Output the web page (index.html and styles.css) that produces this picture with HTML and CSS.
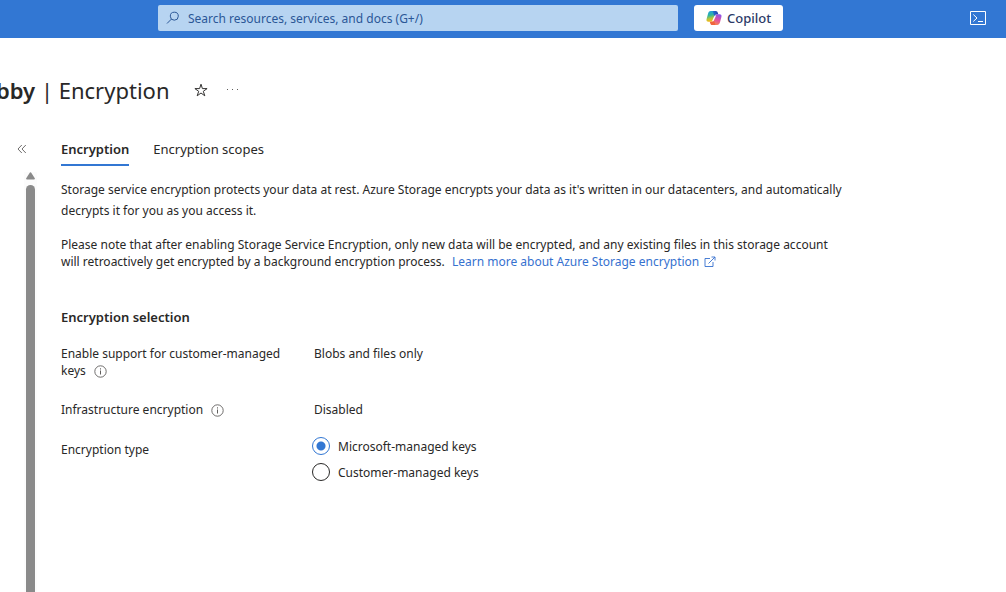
FILE: index.html
```html
<!DOCTYPE html>
<html lang="en">
<head>
<meta charset="utf-8">
<title>Encryption</title>
<link rel="stylesheet" href="styles.css">
</head>
<body>
<header class="topbar">
  <label class="search">
    <svg class="search-icon" width="14" height="14" viewBox="0 0 14 14" fill="none" stroke="currentColor" stroke-width="1"><circle cx="8.3" cy="5.2" r="4"/><path d="M5.4 8.1 1 12.5"/></svg>
    <input class="search-input" type="text" placeholder="Search resources, services, and docs (G+/)" aria-label="Search">
  </label>
  <button class="copilot" type="button">
    <svg width="16" height="16" viewBox="0 0 16 16">
      <defs>
        <linearGradient id="left" x1="0" y1="0" x2="0.2" y2="1"><stop offset="0" stop-color="#1c9be8"/><stop offset=".45" stop-color="#2fb5a0"/><stop offset=".75" stop-color="#b5c63a"/><stop offset="1" stop-color="#f5b91e"/></linearGradient>
        <linearGradient id="right" x1=".6" y1="0" x2=".3" y2="1"><stop offset="0" stop-color="#8f55e6"/><stop offset=".5" stop-color="#e0529f"/><stop offset="1" stop-color="#fb8a50"/></linearGradient>
        <linearGradient id="fold" x1="0" y1="0" x2="1" y2="0"><stop offset="0" stop-color="#2277d8"/><stop offset="1" stop-color="#1e3fa8"/></linearGradient>
      </defs>
      <path fill="url(#left)" d="M4.8 1h5L7 10.2c-.4 1.2-1 1.6-2.2 1.6H2.4C.7 11.8.2 10.6.6 9l1.5-5.6C2.600 1.800 3.400 1 4.800 1z"/>
      <path fill="url(#right)" d="M11.200 15h-5L9 5.800c.4-1.200 1-1.600 2.200-1.600h2.400c1.700 0 2.200 1.200 1.800 2.800l-1.500 5.600c-.5 1.600-1.300 2.400-2.700 2.400z"/>
      <path fill="url(#fold)" d="M6.500 1h3.300c1.200 0 1.700.8 2 1.800l.5 1.400h-1.100c-1.200 0-1.800.4-2.200 1.600L8.600 7z"/>
      <path fill="#f0643c" d="M9.500 15H6.200c-1.200 0-1.700-.8-2-1.800l-.5-1.400h1.100c1.200 0 1.800-.4 2.200-1.600L7.400 9z"/>
      <path fill="#fff" d="M8.700 5.500h1.400L7.500 11.200H6z"/>
    </svg>
    <span>Copilot</span>
  </button>
  <button class="shell" type="button" aria-label="Cloud Shell">
    <svg width="16" height="14" viewBox="0 0 16 14" fill="none" stroke="#fff"><path d="M.5.5h15v13H.5zM3.300 3.500 7 7l-3.700 3.500M8 10.500h5"/></svg>
  </button>
</header>
<div class="titlebar">
  <h1 class="title"><strong>bby</strong> | Encryption</h1>
  <button class="icon-button" type="button" aria-label="Favorite">
    <svg width="16" height="16" viewBox="0 0 16 16" fill="none" stroke="#323130"><path d="m8 2.200 1.400 4.400h4.700l-3.800 2.700 1.500 4.500L8 11l-3.800 2.800 1.500-4.500-3.800-2.700h4.700z"/></svg>
  </button>
  <button class="icon-button" type="button" aria-label="More">
    <svg width="16" height="16" viewBox="0 0 16 16" fill="#605e5c"><path d="M2 7h1v1H2zM7 7h1v1H7zM12 7h1v1h-1z"/></svg>
  </button>
</div>
<div class="blade">
  <aside class="rail">
    <button class="collapse" type="button" aria-label="Collapse menu">
      <svg width="10" height="10" viewBox="0 0 10 10" fill="none" stroke="#605e5c" stroke-width=".9"><path d="M4.800 1 1 5l3.800 4M8.800 1 5 5l3.800 4"/></svg>
    </button>
    <div class="scroll">
      <svg width="9" height="8" viewBox="0 0 9 8" fill="#8a8a8a"><path d="M3.600.9a1 1 0 0 1 1.800 0L8.800 6.300Q9.200 7.500 8 7.500H1Q-.2 7.500.2 6.300z"/></svg>
      <div class="thumb"></div>
    </div>
  </aside>
  <main class="content">
    <nav class="tabs">
      <button class="tab active" type="button">Encryption</button>
      <button class="tab" type="button">Encryption scopes</button>
    </nav>
    <p class="intro">Storage service encryption protects your data at rest. Azure Storage encrypts your data as it's written in our datacenters, and automatically<br>decrypts it for you as you access it.</p>
    <p class="note">Please note that after enabling Storage Service Encryption, only new data will be encrypted, and any existing files in this storage account<br>will retroactively get encrypted by a background encryption process. <a class="link" href="#">Learn more about Azure Storage encryption <svg width="12" height="12" viewBox="0 0 12 12" fill="none" stroke="currentColor" stroke-width=".9"><path d="M6 2.500H1v8h8V6M7.500 1H11v3.500M11 1 4.500 7.500"/></svg></a></p>
    <h2 class="section">Encryption selection</h2>
    <div class="fields">
      <div>Enable support for customer-managed<br>keys <svg class="info" width="13" height="13" viewBox="0 0 13 13" fill="none" stroke="#605e5c"><circle cx="6.500" cy="6.500" r="5.700" stroke-width=".9"/><path d="M6.500 5.500v4M6.500 3.300v1.200"/></svg></div>
      <div>Blobs and files only</div>
      <div>Infrastructure encryption <svg class="info" width="13" height="13" viewBox="0 0 13 13" fill="none" stroke="#605e5c"><circle cx="6.500" cy="6.500" r="5.700" stroke-width=".9"/><path d="M6.500 5.500v4M6.500 3.300v1.200"/></svg></div>
      <div>Disabled</div>
      <div class="type-label" id="type-label">Encryption type</div>
      <div class="radios" role="radiogroup" aria-labelledby="type-label">
        <label class="option"><input class="radio" type="radio" name="type" checked>Microsoft-managed keys</label>
        <label class="option"><input class="radio" type="radio" name="type">Customer-managed keys</label>
      </div>
    </div>
  </main>
</div>
</body>
</html>
```
FILE: styles.css
```css
* { box-sizing: border-box; }
body {
  margin: 0;
  height: 100vh;
  display: flex;
  flex-direction: column;
  overflow: hidden;
  background: #fff;
  color: #292827;
  font: 12px/17px "Segoe UI", "Noto Sans", sans-serif;
}
button { border: 0; padding: 0; background: none; font: inherit; color: inherit; }
svg { flex: none; }
.topbar {
  flex: none;
  display: flex;
  align-items: center;
  height: 38px;
  padding: 0 20px 2px 158px;
  background: #3277d3;
}
.search {
  flex: 0 1 520px;
  display: flex;
  align-items: center;
  gap: 8px;
  height: 26px;
  padding: 0 8px;
  border-radius: 2px;
  background: #b7d4f1;
  color: #2b5797;
}
.search-input {
  flex: 1;
  min-width: 0;
  padding: 0;
  border: 0;
  outline: 0;
  background: none;
  font: inherit;
  color: inherit;
}
.search-input::placeholder { color: #2b5797; opacity: 1; }
.copilot {
  display: flex;
  align-items: center;
  gap: 5px;
  height: 26px;
  margin-left: 16px;
  padding: 0 12px;
  border-radius: 3px;
  background: #fff;
  color: #2b3a67;
  font-size: 13px;
  font-weight: 500;
}
.shell { display: flex; margin-left: auto; }
.titlebar {
  flex: none;
  display: flex;
  align-items: center;
  gap: 16px;
  height: 103px;
  padding-right: 16px;
}
.title {
  margin: 0 8px 0 -4px;
  font-size: 22px;
  line-height: 32px;
  font-weight: 400;
  white-space: nowrap;
}
.title strong { font-weight: 600; }
.icon-button { display: flex; }
.blade { flex: 1; display: flex; min-height: 0; }
.rail {
  flex: none;
  display: flex;
  flex-direction: column;
  width: 37px;
  margin-right: 24px;
}
.collapse { display: flex; margin: 3px 0 0 17px; }
.scroll {
  flex: 1;
  display: flex;
  flex-direction: column;
  align-items: center;
  gap: 5px;
  width: 13px;
  margin-top: 18px;
  align-self: flex-end;
  background: #fcfcfc;
}
.thumb { flex: 1; width: 9px; border-radius: 5px 5px 0 0; background: #8a8a8a; }
.content { flex: 1; min-width: 0; white-space: nowrap; }
.tabs { display: flex; gap: 24px; font-size: 13px; }
.tab { padding: 0 0 6px; border-bottom: 2px solid transparent; }
.tab.active { border-color: #3277d3; font-weight: 600; }
.intro { margin: 13px 0 15px; line-height: 21px; }
.note { margin: 0; }
.link { margin-left: 4px; color: #3671cf; text-decoration: none; }
.link svg { margin-left: 2px; vertical-align: -2px; }
.section { margin: 39px 0 19px; font-size: 13px; font-weight: 600; }
.fields { display: grid; grid-template-columns: 253px 1fr; row-gap: 22px; }
.info { margin-left: 5px; vertical-align: -3px; }
.type-label { padding-top: 1px; }
.radios { display: flex; flex-direction: column; gap: 8px; margin: -3px 0 0 -2px; }
.option { display: flex; align-items: center; gap: 8px; height: 18px; }
.radio {
  appearance: none;
  flex: none;
  width: 18px;
  height: 18px;
  margin: 0;
  border: 1px solid #292827;
  border-radius: 50%;
}
.radio:checked {
  border-color: #3277d3;
  background: radial-gradient(circle, #3277d3 4px, transparent 5px);
}
```
